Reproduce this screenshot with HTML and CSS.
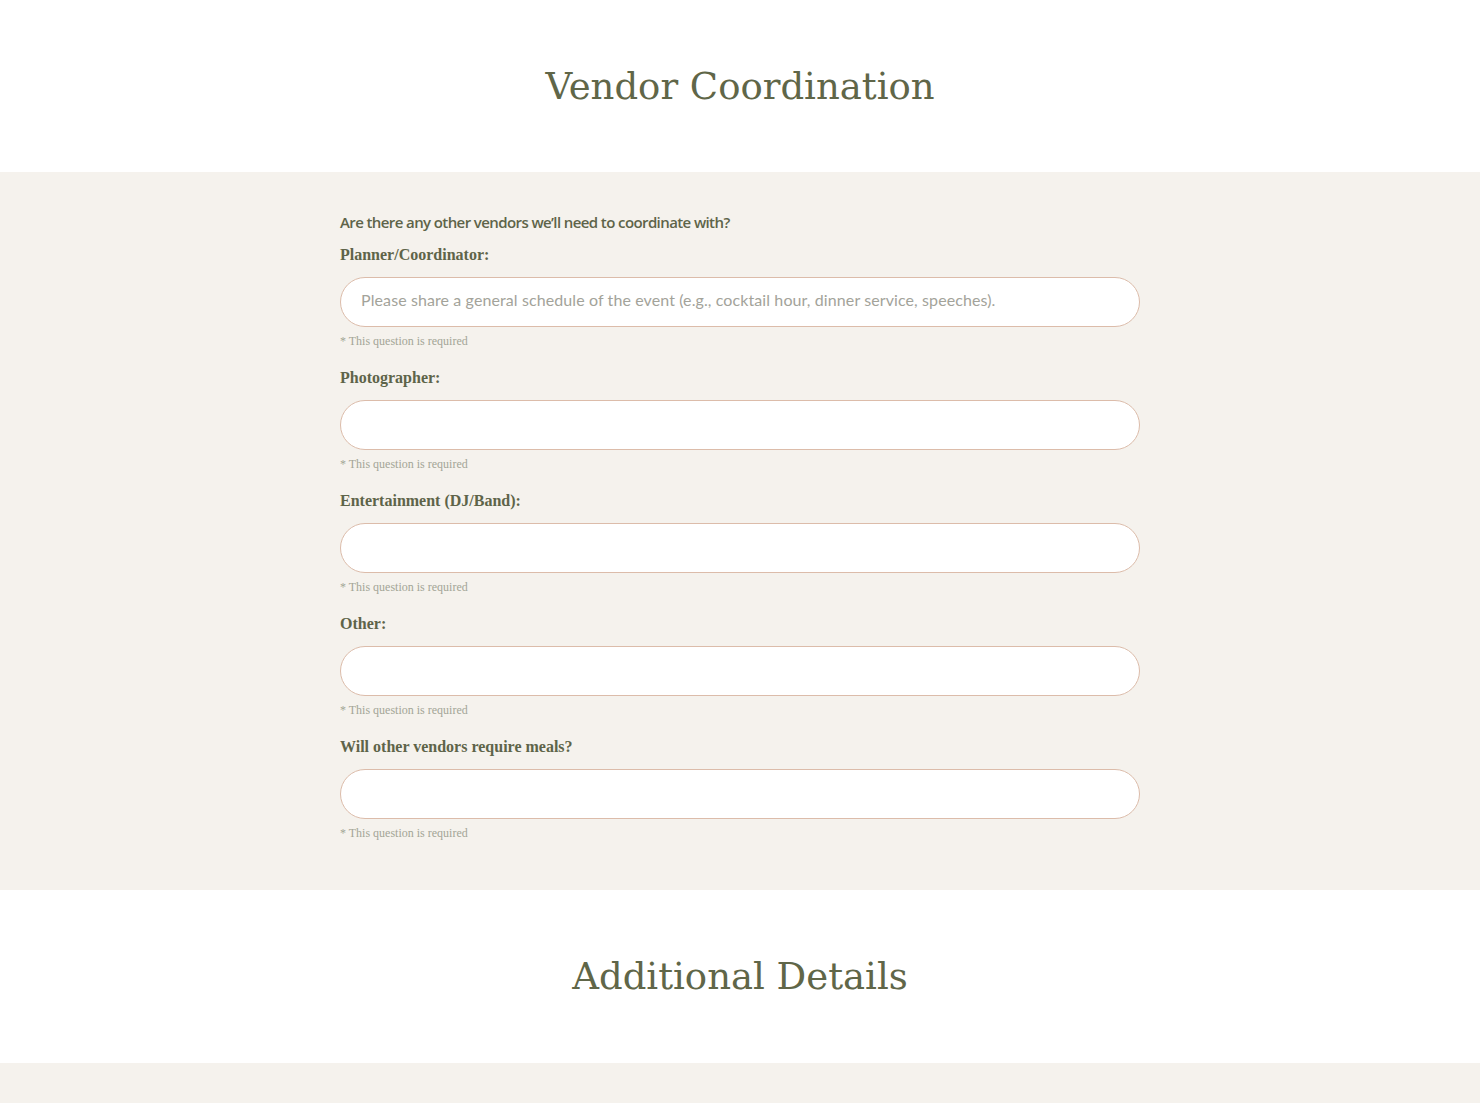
FILE: index.html
```html
<!DOCTYPE html>
<html lang="en">
<head>
    <meta charset="UTF-8">
    <meta name="viewport" content="width=device-width, initial-scale=1.0">
    <title>Vendor Coordination</title>
    <link rel="stylesheet" href="styles.css">
</head>
<body>

    <!-- Section Header -->
    <div class="sectionhead">
        <h2>Vendor Coordination</h2>
    </div>

    <!-- Vendor Questions -->
    <div class="sectionbody">
        <div class="formcontainer">
            <p class="question">Are there any other vendors we’ll need to coordinate with?</p>

            <div class="field">
                <label>Planner/Coordinator:</label>
                <input type="text" placeholder="Please share a general schedule of the event (e.g., cocktail hour, dinner service, speeches).">
                <span class="required">* This question is required</span>
            </div>

            <div class="field">
                <label>Photographer:</label>
                <input type="text">
                <span class="required">* This question is required</span>
            </div>

            <div class="field">
                <label>Entertainment (DJ/Band):</label>
                <input type="text">
                <span class="required">* This question is required</span>
            </div>

            <div class="field">
                <label>Other:</label>
                <input type="text">
                <span class="required">* This question is required</span>
            </div>

            <div class="field">
                <label>Will other vendors require meals?</label>
                <input type="text">
                <span class="required">* This question is required</span>
            </div>
        </div>
    </div>

    <!-- Next Section -->
    <div class="sectionhead next">
        <h2>Additional Details</h2>
    </div>

    <div class="sectionbody"></div>

</body>
</html>
```

FILE: styles.css
```css
body {
    margin: 0;
    padding: 0;
    background-color: #fff;
    font-family: "Liberation Serif", serif;
}

/* Section Header */
.sectionhead {
    height: 172px;
    display: flex;
    align-items: center;
    justify-content: center;
}

.sectionhead.next {
    height: 173px;
}

.sectionhead h2 {
    margin: 0;
    font-family: "DejaVu Serif", serif;
    font-weight: normal;
    font-size: 37px;
    color: #606648;
}

/* Section Body */
.sectionbody {
    background-color: #f5f2ed;
    min-height: 40px;
}

.formcontainer {
    width: 800px;
    margin: 0 auto;
    padding: 40px 0 49px;
}

.question {
    margin: 0 0 14px;
    font-family: "Open Sans", sans-serif;
    font-weight: 600;
    font-size: 15px;
    letter-spacing: -0.6px;
    color: #5e6449;
}

.field {
    display: flex;
    flex-direction: column;
    margin-bottom: 20px;
}

.field:last-child {
    margin-bottom: 0;
}

label {
    font-weight: bold;
    font-size: 16px;
    color: #5e6449;
    margin-bottom: 13px;
}

input {
    box-sizing: border-box;
    width: 100%;
    height: 50px;
    padding: 0 20px 6px;
    border: 1px solid #dcbcaa;
    border-radius: 25px;
    background: #fff;
    font-family: "Lato", sans-serif;
    font-size: 16px;
    letter-spacing: 0.1px;
    color: #555;
    outline: none;
}

input::placeholder {
    color: #a3a39a;
}

.required {
    margin-top: 7px;
    font-size: 12px;
    color: #a3a596;
}
```
